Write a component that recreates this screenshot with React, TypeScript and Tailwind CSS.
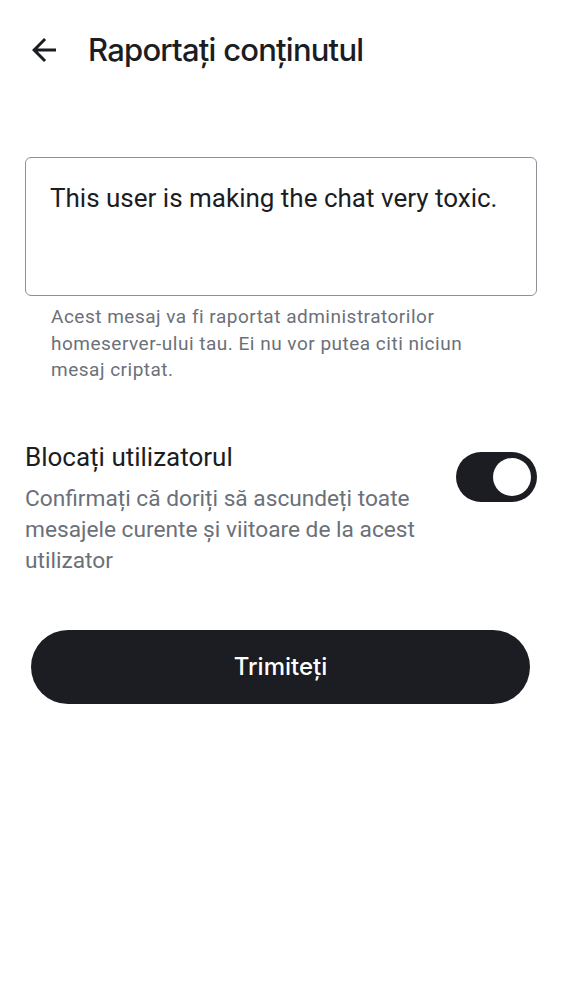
import { useState } from 'react'

function BackIcon() {
  return (
    <svg viewBox="0 0 24 24" className="h-9 w-9" fill="currentColor">
      <path d="M20 11H7.83l5.59-5.59L12 4l-8 8 8 8 1.41-1.41L7.83 13H20v-2z" />
    </svg>
  )
}

export default function App() {
  const [blocked, setBlocked] = useState(true)

  return (
    <div className="min-h-screen bg-white text-[#1b1d22]" style={{ fontFamily: 'Roboto, sans-serif' }}>
      <header className="flex h-[100px] items-center pl-[26px]">
        <button className="flex h-9 w-9 items-center justify-center text-[#1b1d22]">
          <BackIcon />
        </button>
        <h1 className="ml-[26px] font-['Inter',sans-serif] text-[31px] font-medium tracking-tight">
          Raportați conținutul
        </h1>
      </header>

      <main className="px-[25px] pt-[57px]">
        <div className="h-[139px] rounded-md border border-[#8d9299] px-6 pt-6 text-[26px] leading-8">
          This user is making the chat very toxic.
        </div>
        <p className="mt-[8px] ml-[26px] w-[445px] text-[19px] leading-[26.5px] tracking-[0.5px] text-[#6b7079]">
          Acest mesaj va fi raportat administratorilor homeserver-ului tau. Ei nu vor putea citi niciun mesaj criptat.
        </p>

        <div className="mt-[57px] flex items-start gap-8">
          <div className="flex-1">
            <div className="text-[26px] leading-8">Blocați utilizatorul</div>
            <p className="mt-[10px] text-[22.7px] leading-[31px] text-[#6b7079]">
              Confirmați că doriți să ascundeți toate mesajele curente și viitoare de la acest utilizator
            </p>
          </div>
          <button
            onClick={() => setBlocked(!blocked)}
            className={`mt-[11px] flex h-[50px] w-[81px] shrink-0 items-center rounded-full px-[6px] ${
              blocked ? 'justify-end bg-[#1b1d22]' : 'justify-start bg-[#e1e3e8]'
            }`}
          >
            <span className="h-[38px] w-[38px] rounded-full bg-white" />
          </button>
        </div>

        <button className="mx-[6px] mt-[54px] flex h-[74px] w-[499px] items-center justify-center rounded-full bg-[#1b1d22] font-['Inter',sans-serif] text-[24px] font-medium text-white">
          Trimiteți
        </button>
      </main>
    </div>
  )
}
